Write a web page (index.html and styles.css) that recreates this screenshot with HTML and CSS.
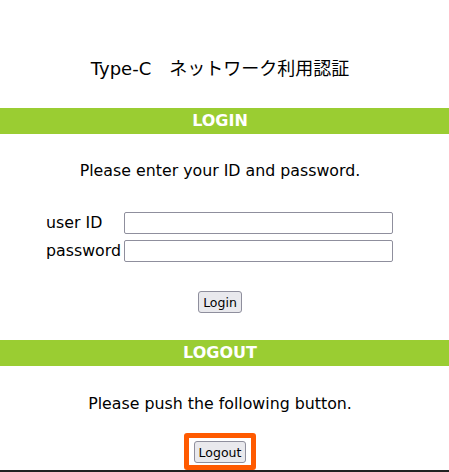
FILE: index.html
```html
<!DOCTYPE html>
<html>
<head>
<meta charset="utf-8">
<link rel="stylesheet" href="styles.css">
</head>
<body>
<div class="page">
  <h1 class="title">Type-C　ネットワーク利用認証</h1>
  <div class="bar">LOGIN</div>
  <div class="content">
    <p class="msg">Please enter your ID and password.</p>
    <div class="form">
      <div class="row"><label class="lbl">user ID</label><input class="field" type="text"></div>
      <div class="row"><label class="lbl">password</label><input class="field" type="password"></div>
    </div>
    <div class="btnrow login-row"><button class="btn">Login</button></div>
  </div>
  <div class="bar">LOGOUT</div>
  <div class="content">
    <p class="msg msg2">Please push the following button.</p>
    <div class="btnrow logout-row"><span class="highlight"><button class="btn">Logout</button></span></div>
  </div>
  <div class="rule"></div>
</div>
</body>
</html>
```

FILE: styles.css
```css
html, body {
  margin: 0;
  padding: 0;
  background: #fff;
}
body {
  font-family: "DejaVu Sans", Verdana, sans-serif;
  color: #000;
  font-size: 16px;
}
.page {
  width: 449px;
  height: 472px;
  overflow: hidden;
  display: flex;
  flex-direction: column;
}
.title {
  margin: 0;
  padding: 56px 9px 0 0;
  height: 108px;
  box-sizing: border-box;
  font-size: 18px;
  font-weight: normal;
  text-align: center;
  line-height: 26px;
  font-family: "DejaVu Sans", "Noto Sans CJK JP", sans-serif;
}
.bar {
  background: #9acd32;
  color: #fff;
  font-weight: bold;
  text-align: center;
  height: 26px;
  line-height: 26px;
  padding-right: 9px;
  font-size: 16px;
}
.content {
  padding-right: 9px;
  display: flex;
  flex-direction: column;
  align-items: center;
}
.msg {
  margin: 26px 0 0;
  line-height: 22px;
  font-size: 15.8px;
}
.form {
  margin-top: 30px;
  display: flex;
  flex-direction: column;
  gap: 6px;
  align-self: flex-start;
  margin-left: 46px;
}
.row {
  display: flex;
  align-items: center;
}
.lbl {
  width: 78px;
  font-size: 15.8px;
  line-height: 22px;
}
.field {
  width: 269px;
  height: 22px;
  box-sizing: border-box;
  border: 1px solid #8f8f9d;
  border-radius: 2px;
  margin: 0;
  padding: 1px 2px;
}
.btnrow {
  display: flex;
  justify-content: center;
}
.login-row {
  margin-top: 29px;
  margin-bottom: 27px;
}
.btn {
  font-family: "DejaVu Sans", Verdana, sans-serif;
  font-size: 12.5px;
  height: 22px;
  padding: 0 4px;
  background: #e9e9ed;
  border: 1px solid #8f8f9d;
  border-radius: 3px;
  color: #000;
  margin: 0;
}
.msg2 {
  margin-top: 27px;
}
.logout-row {
  margin-top: 18px;
}
.highlight {
  display: inline-block;
  border: 5px solid #ff5a00;
  border-radius: 3px;
  padding: 3px 5px 2px;
}
.rule {
  margin-top: 0;
  height: 2px;
  background: #222;
}
```
